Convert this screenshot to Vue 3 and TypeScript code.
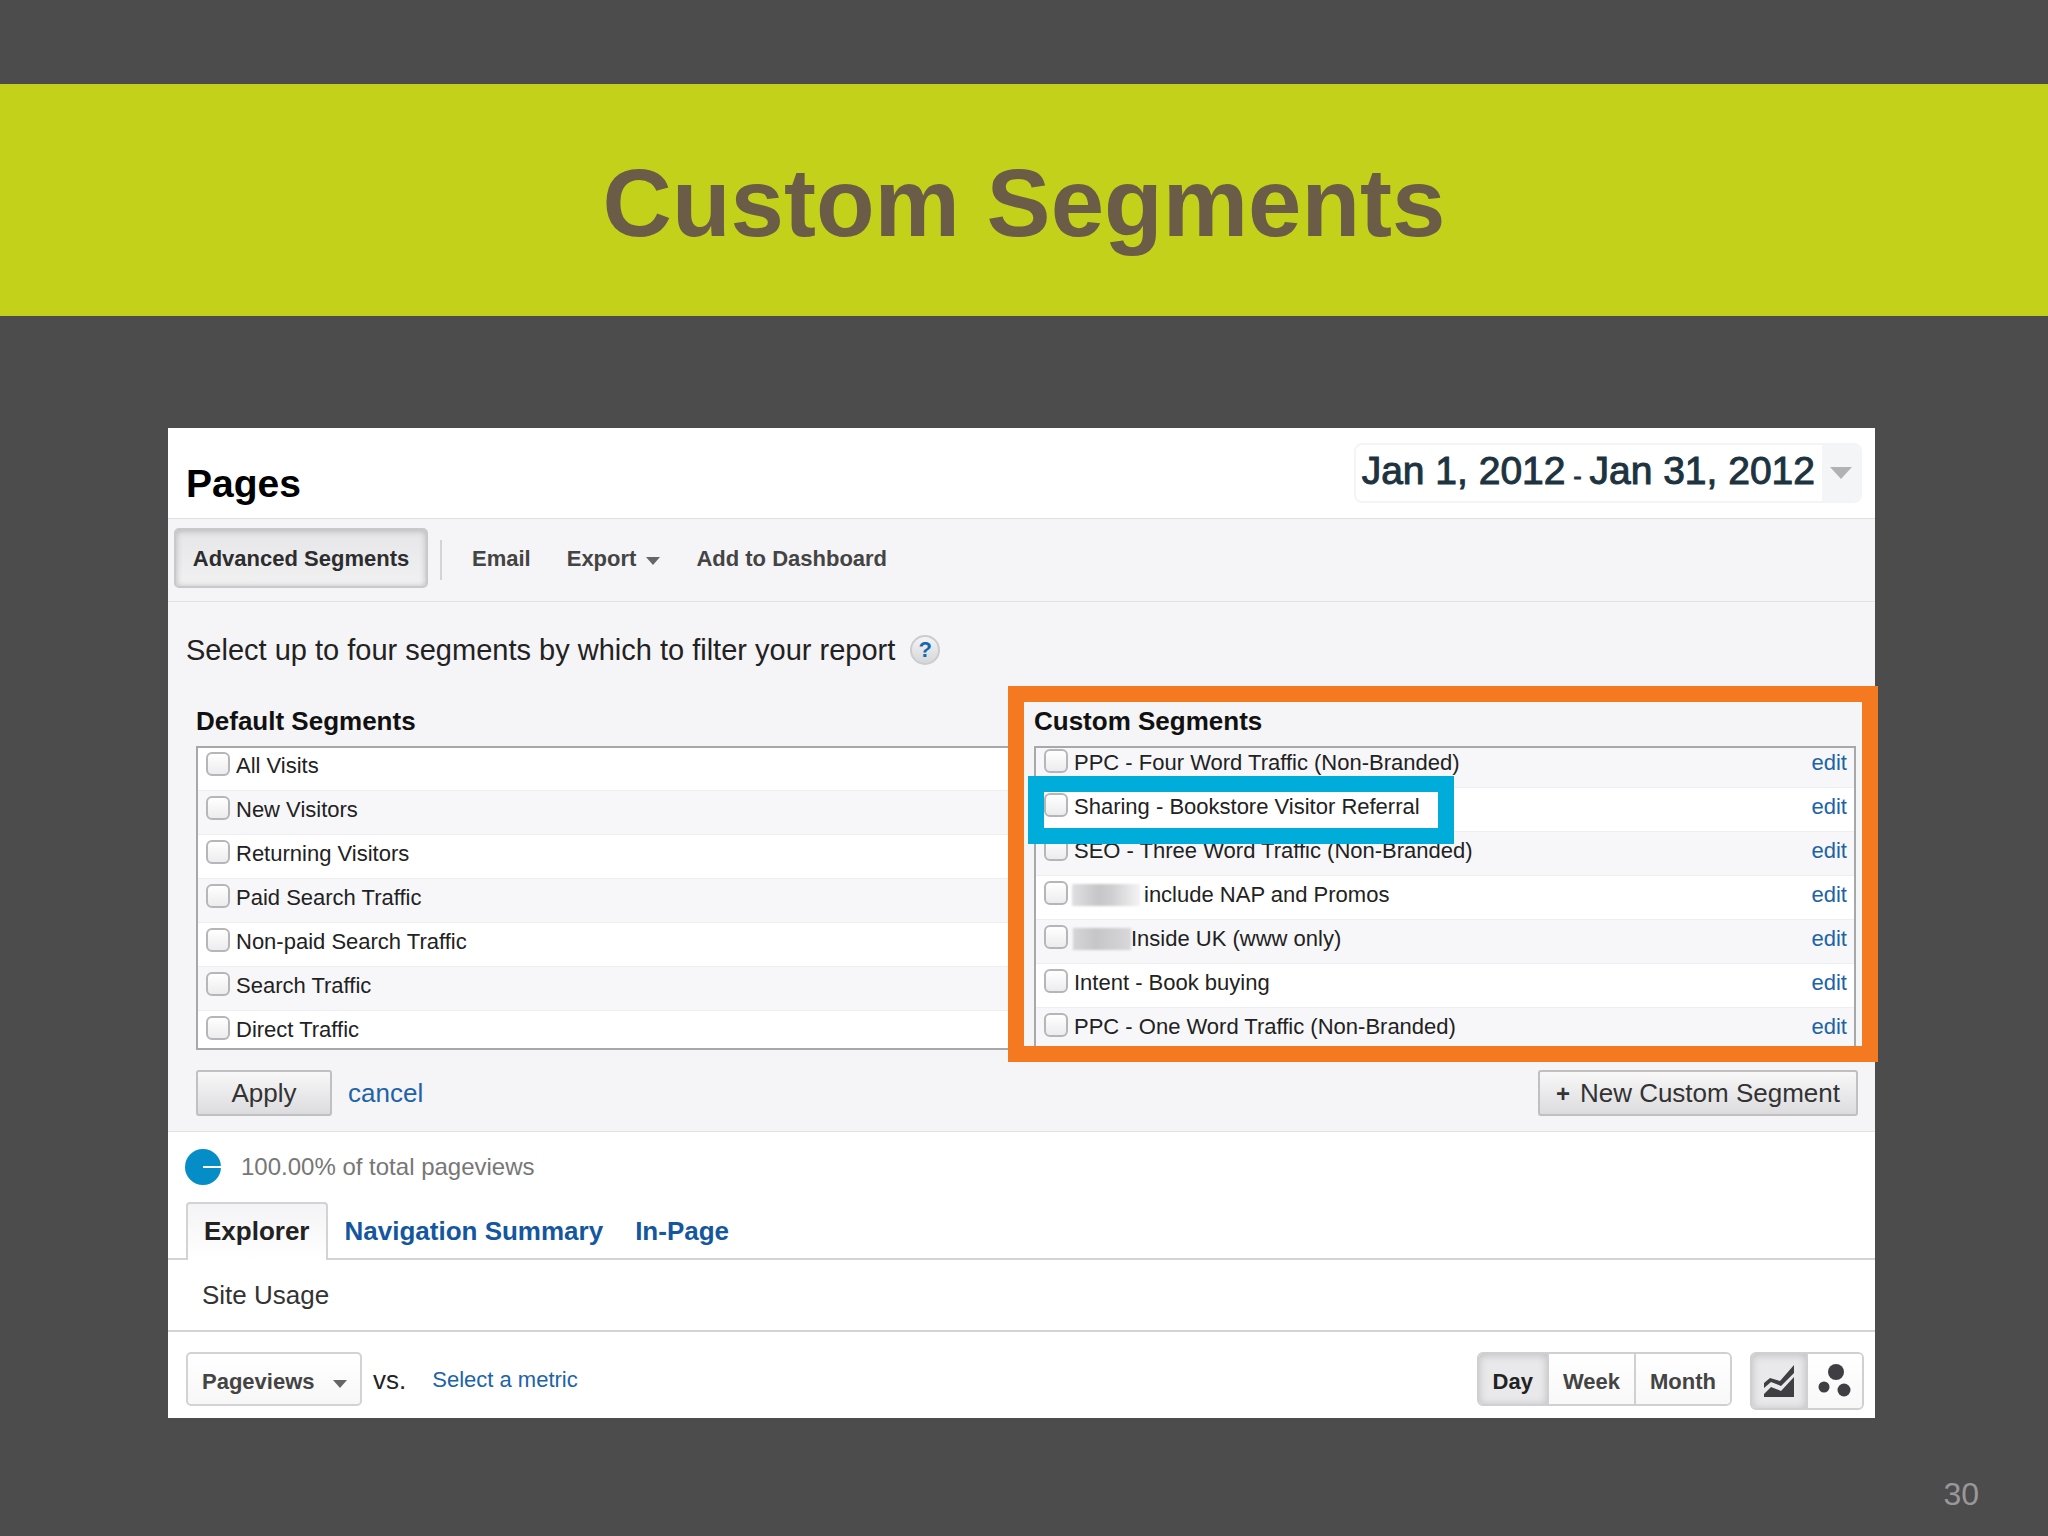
<script setup lang="ts">
import { ref } from 'vue'

interface Segment {
  id: string
  name: string
  hidden?: 'wide' | 'narrow'
}

const defaultSegments: Segment[] = [
  { id: 'all', name: 'All Visits' },
  { id: 'new', name: 'New Visitors' },
  { id: 'returning', name: 'Returning Visitors' },
  { id: 'paid', name: 'Paid Search Traffic' },
  { id: 'non-paid', name: 'Non-paid Search Traffic' },
  { id: 'search', name: 'Search Traffic' },
  { id: 'direct', name: 'Direct Traffic' },
]

const customSegments: Segment[] = [
  { id: 'ppc-four', name: 'PPC - Four Word Traffic (Non-Branded)' },
  { id: 'sharing', name: 'Sharing - Bookstore Visitor Referral' },
  { id: 'seo-three', name: 'SEO - Three Word Traffic (Non-Branded)' },
  { id: 'nap', name: 'include NAP and Promos', hidden: 'wide' },
  { id: 'uk', name: 'Inside UK (www only)', hidden: 'narrow' },
  { id: 'intent', name: 'Intent - Book buying' },
  { id: 'ppc-one', name: 'PPC - One Word Traffic (Non-Branded)' },
]

const selected = ref<string[]>([])
const periods = ['Day', 'Week', 'Month'] as const
const period = ref<(typeof periods)[number]>('Day')
const chart = ref<'line' | 'motion'>('line')
const metric = ref('Pageviews')
</script>

<template>
  <main class="slide">
    <header class="banner">
      <h1>Custom Segments</h1>
    </header>

    <section class="panel">
      <div class="panel-head">
        <h2>Pages</h2>
        <button class="dates" type="button">
          <span class="range">
            <span>Jan 1, 2012</span>
            <span class="dash">-</span>
            <span>Jan 31, 2012</span>
          </span>
          <span class="dates-arrow">
            <svg width="22" height="12" viewBox="0 0 22 12"><path d="M0 0h22L11 12z" fill="#b1b2b4" /></svg>
          </span>
        </button>
      </div>

      <nav class="toolbar">
        <button class="advanced" type="button">Advanced Segments</button>
        <span class="divider"></span>
        <button class="tool" type="button">Email</button>
        <button class="tool" type="button">
          Export
          <svg class="caret" width="14" height="8" viewBox="0 0 14 8"><path d="M0 0h14L7 8z" fill="#666" /></svg>
        </button>
        <button class="tool" type="button">Add to Dashboard</button>
      </nav>

      <div class="segments">
        <p class="prompt">
          Select up to four segments by which to filter your report
          <button class="help" type="button">?</button>
        </p>

        <div class="columns">
          <section class="column">
            <h3>Default Segments</h3>
            <div class="box">
              <ul class="list">
                <li v-for="s in defaultSegments" :key="s.id">
                  <input :id="s.id" v-model="selected" type="checkbox" :value="s.id" />
                  <label :for="s.id">{{ s.name }}</label>
                </li>
              </ul>
            </div>
          </section>

          <section class="column">
            <h3>Custom Segments</h3>
            <div class="box">
              <ul class="list scrolled">
                <li v-for="s in customSegments" :key="s.id">
                  <input :id="s.id" v-model="selected" type="checkbox" :value="s.id" />
                  <label :for="s.id"><span v-if="s.hidden" class="redacted" :class="s.hidden"></span>{{ s.name }}</label>
                  <a href="#">edit</a>
                </li>
              </ul>
            </div>
            <div class="frame frame-orange"></div>
            <div class="frame frame-blue"></div>
          </section>
        </div>

        <div class="actions">
          <button class="button apply" type="button">Apply</button>
          <a href="#">cancel</a>
          <button class="button create" type="button"><span class="plus">+</span>New Custom Segment</button>
        </div>
      </div>

      <div class="total">
        <svg width="36" height="36" viewBox="0 0 36 36">
          <circle cx="18" cy="18" r="18" fill="#058dc7" />
          <path d="M18 18h18" stroke="#fff" stroke-width="2" />
        </svg>
        <span>100.00% of total pageviews</span>
      </div>

      <nav class="tabs">
        <a class="tab active" href="#">Explorer</a>
        <a class="tab" href="#">Navigation Summary</a>
        <a class="tab" href="#">In-Page</a>
      </nav>

      <div class="subtab">Site Usage</div>

      <div class="controls">
        <span class="metric">
          <select v-model="metric" aria-label="Metric">
            <option>Pageviews</option>
          </select>
          <svg class="caret" width="14" height="8" viewBox="0 0 14 8"><path d="M0 0h14L7 8z" fill="#666" /></svg>
        </span>
        <span class="versus">vs.</span>
        <a class="compare" href="#">Select a metric</a>

        <div class="group periods">
          <button v-for="p in periods" :key="p" type="button" :class="{ on: p === period }" @click="period = p">{{ p }}</button>
        </div>
        <div class="group charts">
          <button type="button" aria-label="Line chart" :class="{ on: chart === 'line' }" @click="chart = 'line'">
            <svg width="30" height="33" viewBox="0 0 30 33" fill="#3f3e42">
              <path d="M0 18l6-5 10 3L30 0v8L17 21 7 17 0 23z" />
              <path d="M0 29l7-7 10 4 13-14v20H0z" />
            </svg>
          </button>
          <button type="button" aria-label="Motion chart" :class="{ on: chart === 'motion' }" @click="chart = 'motion'">
            <svg width="34" height="34" viewBox="0 0 34 34" fill="#3f3e42">
              <circle cx="18" cy="8" r="8" />
              <circle cx="6" cy="23" r="5.5" />
              <circle cx="26" cy="26" r="6.5" />
            </svg>
          </button>
        </div>
      </div>
    </section>

    <footer class="page-number">30</footer>
  </main>
</template>

<style>
body {
  margin: 0;
  background: #4c4c4d;
}
</style>

<style scoped>
.slide {
  box-sizing: border-box;
  min-height: 100vh;
  display: flex;
  flex-direction: column;
  padding-top: 84px;
  background: #4c4c4d;
  color: #222;
  font-family: "Liberation Sans", Arial, sans-serif;
  font-size: 22px;
}

.slide * {
  box-sizing: border-box;
}

h1, h2, h3, p, ul {
  margin: 0;
  padding: 0;
}

button, select {
  margin: 0;
  padding: 0;
  border: 0;
  background: none;
  color: inherit;
  font: inherit;
}

a {
  color: #1d63a8;
  text-decoration: none;
}

.banner {
  display: flex;
  align-items: center;
  justify-content: center;
  height: 232px;
  padding-top: 6px;
  background: #c3d11a;
}

h1 {
  color: #6a5c47;
  font-size: 96px;
  line-height: 112px;
}

.panel {
  margin: 112px 173px 0 168px;
  background: #fff;
}

.panel-head {
  display: flex;
  align-items: center;
  justify-content: space-between;
  height: 91px;
  padding: 0 13px 0 18px;
  border-bottom: 1px solid #dfdfe1;
}

h2 {
  padding-top: 22px;
  color: #000;
  font-size: 39px;
  line-height: 44px;
}

.dates {
  display: flex;
  height: 60px;
  border: 2px solid #f3f4f6;
  border-radius: 8px;
  overflow: hidden;
  color: #1d3340;
  font-size: 39px;
  line-height: 52px;
  -webkit-text-stroke: 1px #1d3340;
}

.range {
  display: flex;
  align-items: baseline;
  gap: 8px;
  padding: 0 7px 0 6px;
}

.dash {
  font-size: 24px;
}

.dates-arrow {
  display: flex;
  align-items: center;
  justify-content: center;
  width: 38px;
  height: 56px;
  background: #f4f5f7;
}

.toolbar {
  display: flex;
  align-items: center;
  height: 83px;
  padding: 0 6px;
  border-bottom: 1px solid #e2e2e4;
  background: #f5f4f6;
  color: #444;
  font-weight: bold;
}

.advanced {
  width: 254px;
  height: 60px;
  margin-bottom: 4px;
  padding-top: 2px;
  border: 2px solid #c9c9cb;
  border-radius: 5px;
  background: linear-gradient(#e6e6e8, #f1f1f2);
  box-shadow: inset 0 1px 6px #b4b4b6;
  color: #2d2d2f;
}

.divider {
  width: 2px;
  height: 40px;
  margin: 0 30px 0 12px;
  background: #d4d4d6;
}

.tool {
  display: flex;
  align-items: center;
  gap: 10px;
  margin: 0 36px 2px 0;
}

.tool .caret {
  margin-top: 4px;
}

.segments {
  padding: 31px 19px 15px 28px;
  border-bottom: 1px solid #e2e2e4;
  background: #f5f4f6;
}

.prompt {
  display: flex;
  align-items: center;
  gap: 15px;
  margin: 0 0 39px -10px;
  font-size: 29px;
  line-height: 34px;
}

.help {
  width: 30px;
  height: 30px;
  border: 2px solid #cbcccf;
  border-radius: 50%;
  background: linear-gradient(#f4f4f5, #d6d7da);
  color: #1466ae;
  font-size: 22px;
  font-weight: bold;
  line-height: 26px;
}

.columns {
  display: grid;
  grid-template-columns: 1fr 1fr;
  gap: 16px;
}

.column {
  position: relative;
}

h3 {
  margin-bottom: 10px;
  color: #111;
  font-size: 26px;
  line-height: 30px;
}

.box {
  height: 304px;
  overflow: hidden;
  border: 2px solid #a8a8aa;
  background: #fff;
}

.list {
  margin-top: -1px;
  list-style: none;
}

.list.scrolled {
  margin-top: -4px;
}

li {
  display: flex;
  gap: 6px;
  height: 44px;
  padding: 5px 7px 0 8px;
  border-bottom: 1px solid #eeeef0;
  line-height: 28px;
}

li:nth-child(even),
.scrolled li:nth-child(odd) {
  background: #f7f7f9;
}

.scrolled li:nth-child(even) {
  background: #fff;
}

label {
  flex: 1;
}

input[type="checkbox"] {
  appearance: none;
  width: 24px;
  height: 24px;
  margin: 0;
  border: 2px solid #b6b6b8;
  border-radius: 6px;
  background: linear-gradient(#fff, #ececee);
}

.redacted {
  display: inline-block;
  height: 22px;
  background: linear-gradient(90deg, #e0dfe1, #c6c5c8 40%, #d0cfd1 60%, #f4f4f5);
  vertical-align: -4px;
  filter: blur(1px);
}

.wide {
  width: 68px;
  margin: 0 4px 0 -2px;
}

.narrow {
  width: 58px;
  margin-left: -1px;
  background: linear-gradient(90deg, #d5d4d7, #c6c5c8 40%, #d8d7d9);
}

.frame {
  position: absolute;
  border: 16px solid;
  pointer-events: none;
}

.frame-orange {
  inset: -20px -22px -12px -26px;
  border-color: #f57921;
}

.frame-blue {
  top: 70px;
  left: -6px;
  width: 426px;
  height: 68px;
  border-color: #00acd9;
}

.actions {
  display: flex;
  align-items: center;
  gap: 16px;
  margin-top: 20px;
  margin-right: -2px;
  font-size: 26px;
}

.button {
  height: 46px;
  border: 2px solid #c0c0c2;
  border-radius: 3px;
  background: linear-gradient(#f8f8f9, #dcdcde);
  color: #333;
}

.apply {
  width: 136px;
}

.create {
  margin-left: auto;
  padding: 0 16px;
}

.plus {
  margin-right: 10px;
  font-size: 24px;
  font-weight: bold;
}

.total {
  display: flex;
  align-items: center;
  gap: 20px;
  height: 70px;
  padding: 0 17px;
  color: #777;
  font-size: 24px;
}

.tabs {
  display: flex;
  height: 58px;
  padding: 0 18px;
  border-bottom: 2px solid #d3d3d5;
  font-size: 26px;
  font-weight: bold;
  line-height: 58px;
}

.tab {
  margin-right: 32px;
  color: #14579f;
}

.tab.active {
  height: 58px;
  margin-right: 17px;
  padding: 0 16px;
  border: 2px solid #d3d3d5;
  border-bottom: 0;
  border-radius: 4px 4px 0 0;
  background: linear-gradient(#f4f4f6, #fff);
  color: #222;
  line-height: 54px;
}

.subtab {
  height: 72px;
  padding-left: 34px;
  border-bottom: 2px solid #d3d3d5;
  color: #333;
  font-size: 26px;
  line-height: 70px;
}

.controls {
  display: flex;
  align-items: flex-start;
  padding: 20px 11px 8px 18px;
  line-height: 56px;
}

.metric {
  position: relative;
}

.metric select {
  display: block;
  appearance: none;
  width: 176px;
  height: 54px;
  padding-left: 14px;
  border: 2px solid #d3d3d5;
  border-radius: 5px;
  background: linear-gradient(#fff, #f7f7f8);
  color: #444;
  font-weight: bold;
}

.metric .caret {
  position: absolute;
  top: 28px;
  right: 15px;
  pointer-events: none;
}

.versus {
  margin: 0 26px 0 11px;
  font-size: 26px;
}

.group {
  display: flex;
  border: 2px solid #d0d0d3;
  border-radius: 6px;
  overflow: hidden;
}

.group button {
  background: linear-gradient(#fff, #f8f8f9);
}

.group button + button {
  border-left: 2px solid #d0d0d3;
}

.group .on {
  background: #e9e9eb;
  box-shadow: inset 0 1px 8px #bcbcbf;
}

.periods {
  height: 54px;
  margin-left: auto;
  color: #444;
  font-weight: bold;
}

.periods button {
  padding: 0 14px;
}

.periods .on {
  color: #222;
}

.charts {
  height: 58px;
  margin-left: 18px;
}

.charts button {
  display: flex;
  align-items: center;
  justify-content: center;
  width: 56px;
}

.charts .on {
  width: 54px;
}

.page-number {
  margin: auto 69px 24px auto;
  color: #98989a;
  font-size: 32px;
  line-height: 36px;
}
</style>
